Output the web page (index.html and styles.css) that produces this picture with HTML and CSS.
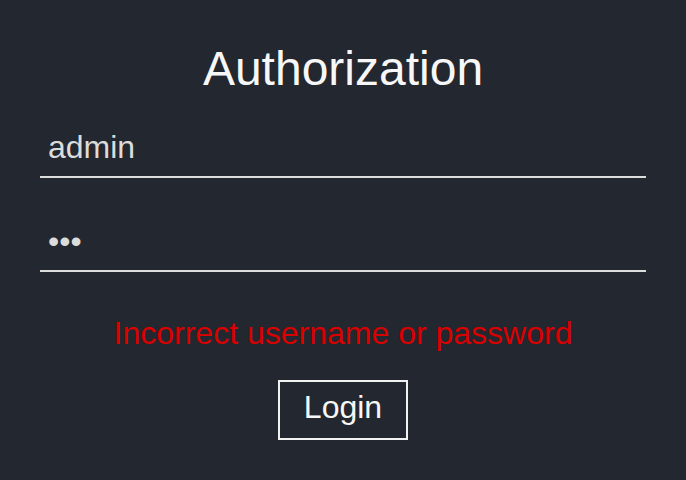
FILE: index.html
```html
<!DOCTYPE html>
<html lang="en">
<head>
<meta charset="utf-8">
<title>Authorization</title>
<link rel="stylesheet" href="styles.css">
</head>
<body>
<form class="auth">
  <h1 class="auth-title">Authorization</h1>
  <input class="auth-input auth-user" type="text" value="admin">
  <input class="auth-input auth-pass" type="password" value="123">
  <p class="auth-error">Incorrect username or password</p>
  <button class="auth-btn" type="button">Login</button>
</form>
</body>
</html>
```

FILE: styles.css
```css
html, body {
  margin: 0;
  padding: 0;
  background: #23272f;
  height: 100%;
}
body {
  font-family: "Liberation Sans", Arial, sans-serif;
}
.auth {
  display: flex;
  flex-direction: column;
  align-items: stretch;
  padding: 41px 40px 0;
}
.auth-title {
  margin: 0;
  font-size: 48px;
  font-weight: normal;
  line-height: 55px;
  color: #f7f7f7;
  text-align: center;
}
.auth-input {
  box-sizing: border-box;
  height: 60px;
  margin: 0;
  padding: 0 8px;
  border: none;
  border-bottom: 2px solid #dcdcdc;
  background: transparent;
  color: #dcdcdc;
  font-family: "Liberation Sans", Arial, sans-serif;
  font-size: 32px;
  outline: none;
}
.auth-user {
  margin-top: 22px;
}
.auth-pass {
  margin-top: 34px;
}
.auth-error {
  margin: 43px 0 0;
  font-size: 32px;
  line-height: 37px;
  color: #d90000;
  text-align: center;
}
.auth-btn {
  align-self: center;
  margin-top: 28px;
  box-sizing: border-box;
  height: 60px;
  padding: 0 24px 6px;
  border: 2px solid #f2f2f2;
  background: transparent;
  color: #f7f7f7;
  font-family: "Liberation Sans", Arial, sans-serif;
  font-size: 32px;
  line-height: 36px;
  cursor: pointer;
}
```
